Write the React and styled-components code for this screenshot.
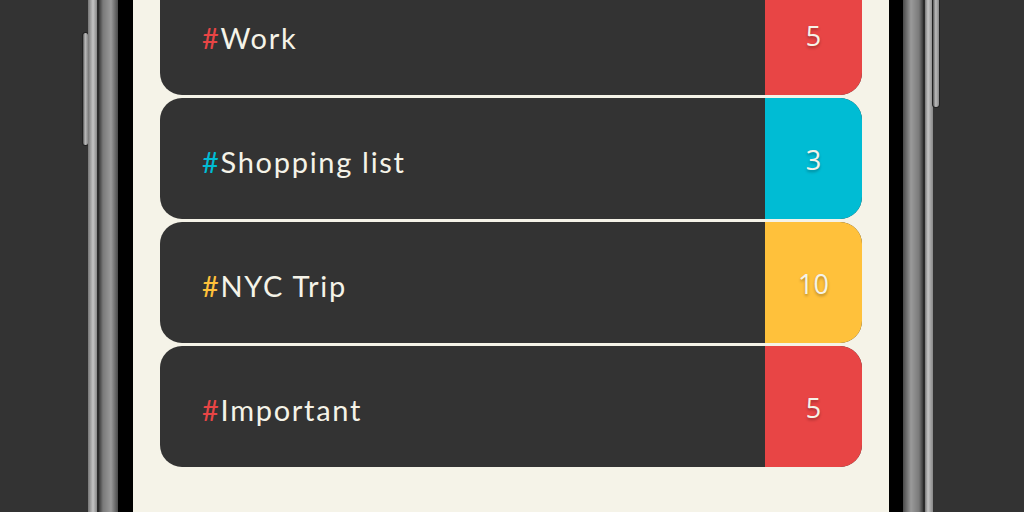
import styled, { createGlobalStyle } from "styled-components";

const GlobalStyle = createGlobalStyle`
  html, body {
    margin: 0;
    padding: 0;
    background: #333333;
  }
  * {
    box-sizing: border-box;
  }
`;

const Stage = styled.div`
  height: 512px;
  overflow: hidden;
  background: #333333;
  display: flex;
  align-items: stretch;
  padding-left: 83px;
`;

// hardware buttons sticking out of the phone frame
const SideButton = styled.div`
  width: ${(p) => p.$w}px;
  height: ${(p) => p.$h}px;
  margin-top: ${(p) => p.$top}px;
  align-self: flex-start;
  border-radius: 3px;
  background: linear-gradient(90deg, #555 0%, #bbb 45%, #888 100%);
  box-shadow: 0 0 0 1px #222;
`;

const Bezel = styled.div`
  width: ${(p) => p.$w}px;
  flex-shrink: 0;
  background: ${(p) =>
    p.$right
      ? `linear-gradient(90deg,
          #000 0px, #000 14px,
          #4a4a4a 14px, #9a9a9a 22px, #7a7a7a 30px, #3a3a3a 34px,
          #2a2a2a 34px, #2a2a2a 36px,
          #777 36px, #c4c4c4 39px, #888 44px)`
      : `linear-gradient(90deg,
          #777 0px, #c4c4c4 5px, #888 9px,
          #2a2a2a 9px, #2a2a2a 11px,
          #3a3a3a 11px, #7a7a7a 15px, #9a9a9a 23px, #4a4a4a 30px,
          #000 30px, #000 45px)`};
`;

const Screen = styled.div`
  width: 756px;
  flex-shrink: 0;
  background: #f5f3e8;
  overflow: hidden;
  padding: 0 27px;
`;

const List = styled.div`
  margin-top: -26px;
  display: flex;
  flex-direction: column;
  gap: 3px;
`;

const Card = styled.div`
  height: 121px;
  display: flex;
  border-radius: 22px;
  overflow: hidden;
  background: #333333;
`;

const Label = styled.div`
  flex: 1;
  display: flex;
  align-items: center;
  padding: 6px 0 0 42px;
  font-family: "Lato", "Open Sans", sans-serif;
  font-size: 29px;
  letter-spacing: 1.7px;
  color: #f5f3e8;

  span {
    color: ${(p) => p.$accent};
  }
`;

const Count = styled.div`
  width: 97px;
  flex-shrink: 0;
  display: flex;
  align-items: center;
  justify-content: center;
  padding: 1px 0 0 0;
  background: ${(p) => p.$accent};
  font-family: "Open Sans", sans-serif;
  font-size: 27px;
  color: #f5f3e8;
  text-shadow: 0 2px 3px rgba(0, 0, 0, 0.3);
`;

const tags = [
  { name: "Work", count: 5, color: "#e84545" },
  { name: "Shopping list", count: 3, color: "#00bcd4" },
  { name: "NYC Trip", count: 10, color: "#ffc13b" },
  { name: "Important", count: 5, color: "#e84545" },
];

const App = () => {
  return (
    <>
      <GlobalStyle />
      <Stage>
        <SideButton $w={5} $h={112} $top={33} />
        <Bezel $w={45} />
        <Screen>
          <List>
            {tags.map((t) => (
              <Card key={t.name}>
                <Label $accent={t.color}>
                  <span>#</span>
                  {t.name}
                </Label>
                <Count $accent={t.color}>{t.count}</Count>
              </Card>
            ))}
          </List>
        </Screen>
        <Bezel $w={44} $right />
        <SideButton $w={6} $h={112} $top={-5} />
      </Stage>
    </>
  );
};

export default App;
